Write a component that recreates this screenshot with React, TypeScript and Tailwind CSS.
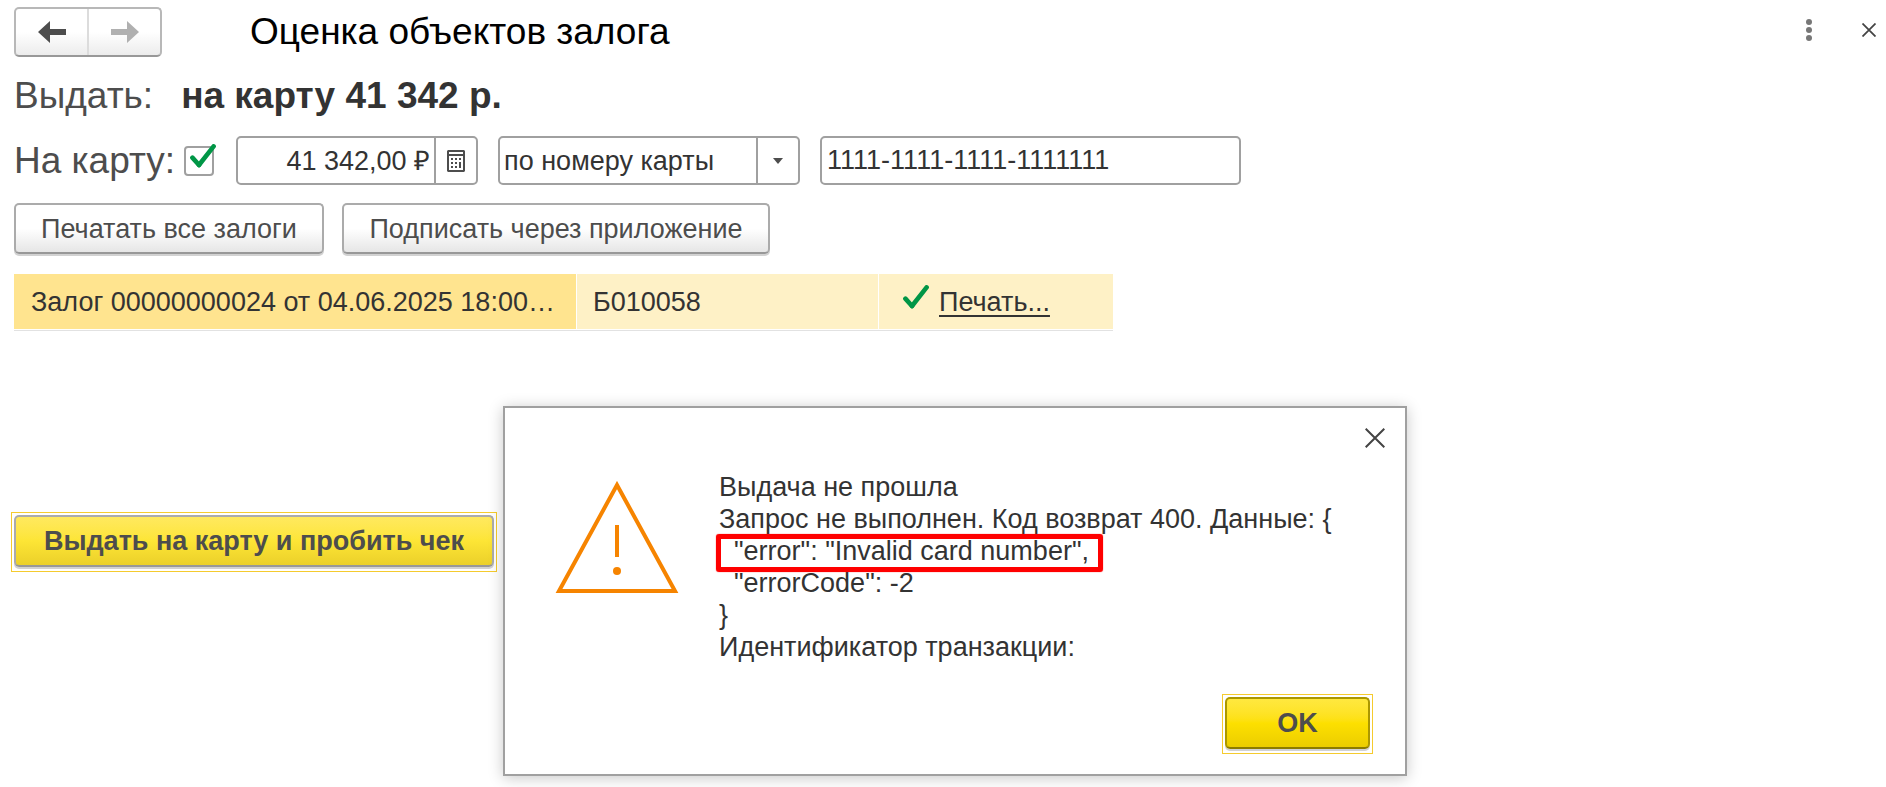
import React, { useState } from 'react';

/** Галочка: используется в флажке и в строке таблицы */
const CheckMark: React.FC<{ className?: string }> = ({ className }) => (
  <svg viewBox="0 0 26 24" className={className} fill="none" aria-hidden>
    <path d="M2.4 13.6 L9 21" stroke="#009646" strokeWidth="4.6" strokeLinecap="round" />
    <path d="M9 21 L23.6 2.4" stroke="#009646" strokeWidth="4.6" strokeLinecap="round" />
  </svg>
);

const Arrow: React.FC<{ className?: string }> = ({ className }) => (
  <svg viewBox="0 0 28 22" className={className} fill="currentColor" aria-hidden>
    <path d="M0 11 L12 0 V8 H28 V14 H12 V22 Z" />
  </svg>
);

const Calculator: React.FC = () => (
  <svg viewBox="0 0 18 22" className="h-[22px] w-[18px]" fill="#4d4d4d" aria-hidden>
    <path
      fillRule="evenodd"
      d="M1 0 H17 L18 1 V21 L17 22 H1 L0 21 V1 Z M2 2 V4 H16 V2 Z M2 6 V20 H16 V6 Z"
    />
    <path d="M4 8h2v2H4zM8 8h2v2H8zM12 8h2v2h-2zM4 12h2v2H4zM8 12h2v2H8zM12 12h2v6h-2zM4 16h2v2H4zM8 16h2v2H8z" />
  </svg>
);

const Cross: React.FC<{ className?: string; stroke: number }> = ({ className, stroke }) => (
  <svg viewBox="0 0 20 20" className={className} fill="none" aria-hidden>
    <path d="M0.7 0.7 L19.3 19.3 M19.3 0.7 L0.7 19.3" stroke="#444" strokeWidth={stroke} />
  </svg>
);

const Warning: React.FC = () => (
  <svg viewBox="0 0 124 113" className="h-[113px] w-[124px] shrink-0" fill="none" aria-hidden>
    <path d="M62 4 L120 110 H4 Z" stroke="#f68400" strokeWidth="4" />
    <path d="M62 44 V76" stroke="#f68400" strokeWidth="4" />
    <circle cx="62" cy="90" r="4" fill="#f68400" />
  </svg>
);

const BUTTON =
  'h-[51px] rounded-[5px] border-2 border-[#ababab] border-b-[#989898] bg-linear-to-b from-white from-50% to-[#e6e6e6] text-[#4d4d4d] shadow-[0_2px_0_#d2d2d2]';

const FIELD = 'h-[49px] rounded-[5px] border-2 border-[#a0a0a0] bg-white';

const App: React.FC = () => {
  const [toCard, setToCard] = useState(true);
  const [open, setOpen] = useState(true);

  return (
    <div className="relative min-h-screen bg-white font-['Liberation_Sans',Arial,sans-serif] text-[27px] leading-8 text-[#333]">
      <header className="flex h-16 items-center pr-px pl-[14px]">
        <div className="flex h-[50px] w-[148px] rounded-[5px] border-2 border-[#b8b8b8] border-b-[#989898] bg-linear-to-b from-white from-50% to-[#ececec]">
          <button
            type="button"
            aria-label="Назад"
            className="flex flex-1 items-center justify-center border-r-2 border-[#dcdcdc] text-[#4d4d4d]"
          >
            <Arrow className="h-[22px] w-7" />
          </button>
          <button
            type="button"
            aria-label="Вперед"
            className="flex flex-1 items-center justify-center text-[#b0b0b0]"
          >
            <Arrow className="h-[22px] w-7 rotate-180" />
          </button>
        </div>
        <h1 className="ml-[88px] text-[37px] leading-10 text-black">Оценка объектов залога</h1>
        <div className="mb-1 ml-auto flex gap-7">
          <button type="button" aria-label="Еще" className="flex h-8 w-8 items-center justify-center">
            <svg viewBox="0 0 6 22" className="h-[22px] w-[6px]" fill="#777" aria-hidden>
              <circle cx="3" cy="3" r="3" />
              <circle cx="3" cy="11" r="3" />
              <circle cx="3" cy="19" r="3" />
            </svg>
          </button>
          <button type="button" aria-label="Закрыть" className="flex h-8 w-8 items-center justify-center">
            <Cross className="h-[14px] w-[14px]" stroke={2.5} />
          </button>
        </div>
      </header>

      <main className="px-[14px]">
        <p className="flex gap-7 pt-3 text-[37px] leading-10">
          <span className="text-[#4d4d4d]">Выдать:</span>
          <b>на карту 41 342 р.</b>
        </p>

        <div className="mt-5 flex items-center">
          <label htmlFor="to-card" className="text-[37px] leading-10 text-[#4d4d4d]">
            На карту:
          </label>
          <span className="relative ml-[9px] h-[30px] w-[30px]">
            <input
              id="to-card"
              type="checkbox"
              checked={toCard}
              onChange={(e) => setToCard(e.target.checked)}
              className="block h-[30px] w-[30px] appearance-none rounded border-2 border-[#a0a0a0] bg-white"
            />
            {toCard && (
              <CheckMark className="pointer-events-none absolute -top-0.5 left-1.5 h-6 w-[26px]" />
            )}
          </span>

          <div className={`${FIELD} ml-[22px] flex w-[242px]`}>
            <input
              type="text"
              aria-label="Сумма"
              defaultValue="41 342,00 ₽"
              className="w-0 flex-1 pr-1 text-right outline-none"
            />
            <button
              type="button"
              aria-label="Калькулятор"
              className="flex w-[42px] items-center justify-center border-l-2 border-[#a0a0a0]"
            >
              <Calculator />
            </button>
          </div>

          <div className={`${FIELD} relative ml-5 w-[302px]`}>
            <select
              aria-label="Способ выдачи"
              className="h-full w-full appearance-none pl-1 outline-none"
            >
              <option>по номеру карты</option>
            </select>
            <span className="pointer-events-none absolute inset-y-0 right-0 flex w-[42px] items-center justify-center border-l-2 border-[#a0a0a0]">
              <svg viewBox="0 0 10 6" className="h-[6px] w-[10px]" fill="#4d4d4d" aria-hidden>
                <path d="M0 0 H10 L5 6 Z" />
              </svg>
            </span>
          </div>

          <input
            type="text"
            aria-label="Номер карты"
            defaultValue="1111-1111-1111-1111111"
            className={`${FIELD} ml-5 w-[421px] px-[5px] outline-none`}
          />
        </div>

        <div className="mt-[18px] flex gap-[18px]">
          <button type="button" className={`${BUTTON} w-[310px]`}>
            Печатать все залоги
          </button>
          <button type="button" className={`${BUTTON} w-[428px]`}>
            Подписать через приложение
          </button>
        </div>

        <table className="mt-5 w-[1099px] table-fixed border-separate border-spacing-0 border-b border-[#e2e2e2]">
          <colgroup>
            <col className="w-[563px]" />
            <col className="w-[302px]" />
            <col />
          </colgroup>
          <tbody>
            <tr className="h-14 bg-[#fef1c6]">
              <td className="truncate border-r border-b border-white bg-[#ffe48f] pl-[17px]">
                Залог 00000000024 от 04.06.2025 18:00…
              </td>
              <td className="border-r border-b border-white pl-4">Б010058</td>
              <td className="border-b border-white pl-6">
                <span className="flex items-center gap-2.5">
                  <CheckMark className="mb-2.5 h-6 w-[26px]" />
                  <a href="#print" className="underline decoration-2 underline-offset-4">
                    Печать...
                  </a>
                </span>
              </td>
            </tr>
          </tbody>
        </table>

        <div className="mt-[181px] -ml-[3px] w-fit border border-[#f5cb2e] p-0.5 pb-1">
          <button
            type="button"
            className="block h-[52px] w-[480px] rounded-[5px] border-2 border-[#ababab] border-b-[#989898] bg-linear-to-b from-[#ffe95e] via-[#fde535] to-[#ebd02a] font-bold text-[#4d4d4d] shadow-[0_2px_0_#d2d2d2]"
          >
            Выдать на карту и пробить чек
          </button>
        </div>
      </main>

      {/* Сообщение об ошибке поверх формы */}
      {open && (
        <section
          role="dialog"
          aria-label="Ошибка выдачи"
          className="absolute top-[406px] left-[503px] flex w-[904px] flex-col border-2 border-[#a0a0a0] bg-white shadow-[0_2px_14px_rgba(0,0,0,0.22)]"
        >
          <button
            type="button"
            aria-label="Закрыть сообщение"
            onClick={() => setOpen(false)}
            className="mt-[14px] mr-[14px] flex h-8 w-8 items-center justify-center self-end"
          >
            <Cross className="h-5 w-5" stroke={2} />
          </button>
          <div className="mt-[17px] flex gap-10 pl-[50px]">
            <div className="pt-2.5">
              <Warning />
            </div>
            <div className="relative whitespace-pre">
              <p>Выдача не прошла</p>
              <p>{'Запрос не выполнен. Код возврат 400. Данные: {'}</p>
              <p>{'  "error": "Invalid card number",'}</p>
              <p>{'  "errorCode": -2'}</p>
              <p>{'}'}</p>
              <p>Идентификатор транзакции:</p>
              <span className="absolute top-[63px] -left-[3px] h-[38px] w-[387px] rounded-[3px] border-[5px] border-[#ff0000] shadow-[0_0_1px_#ff0000]" />
            </div>
          </div>
          <div className="mt-[31px] mr-8 mb-5 self-end border border-[#f5cb2e] p-0.5 pb-1">
            <button
              type="button"
              onClick={() => setOpen(false)}
              className="block h-[52px] w-[145px] rounded-[5px] border-2 border-[#ab9700] border-b-[#8c7c00] bg-linear-to-b from-[#ffe83f] via-[#fde000] to-[#ebcd00] font-bold text-[#4d4d4d] shadow-[0_2px_0_#d2d2d2]"
            >
              OK
            </button>
          </div>
        </section>
      )}
    </div>
  );
};

export default App;
